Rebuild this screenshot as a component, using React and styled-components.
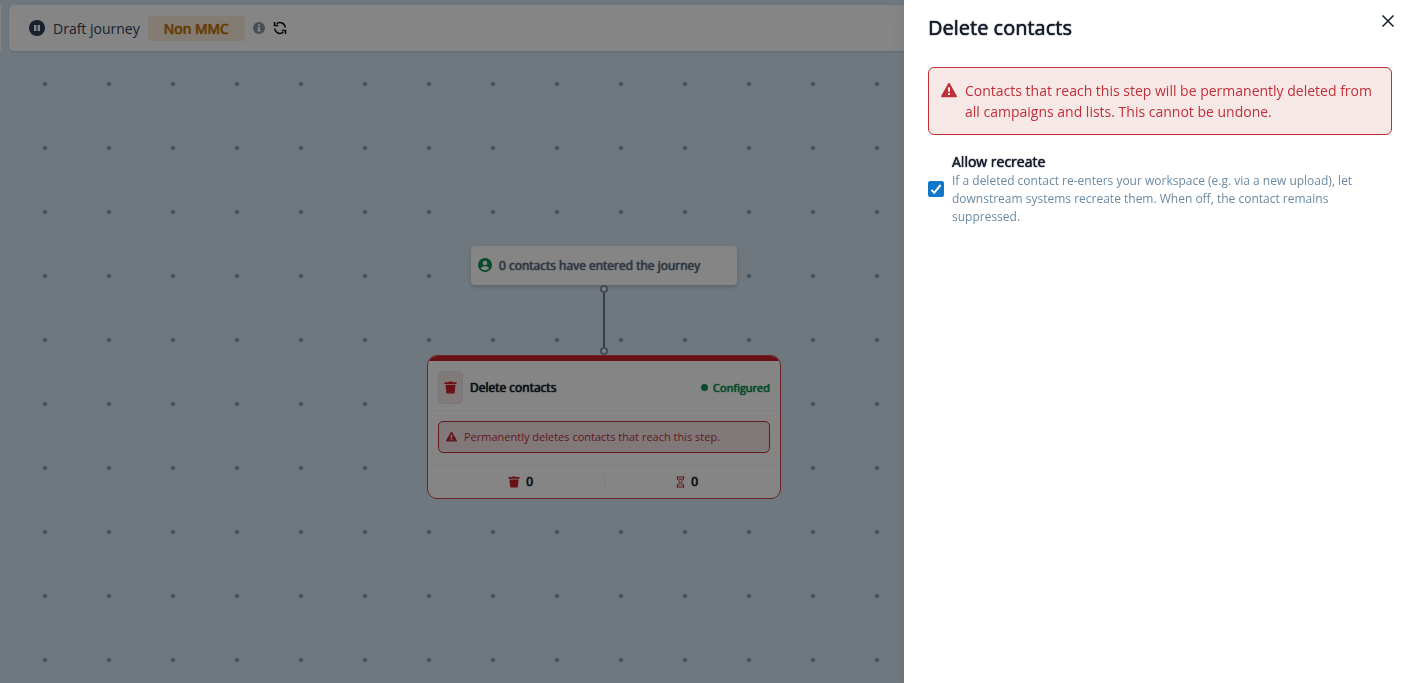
import React, { useState } from 'react';
import styled, { createGlobalStyle, css } from 'styled-components';

const GlobalStyle = createGlobalStyle`
  *, *::before, *::after {
    box-sizing: border-box;
  }

  body {
    margin: 0;
    font-family: "Open Sans", "Noto Sans", sans-serif;
    color: #171e2b;
  }

  h2, h3, p {
    margin: 0;
  }
`;

const TrashIcon = ({ size }) => (
  <svg width={size} height={size} viewBox="0 0 24 24" fill="currentColor" aria-hidden="true">
    <path d="M9 1h6l1.500 1.200H23v3.300H1V2.200h6.500zM2.800 7h18.400L19.800 21.200A2 2 0 0 1 17.800 23H6.200a2 2 0 0 1-2-1.800z" />
  </svg>
);

const WarningIcon = ({ size }) => (
  <svg width={size} height={size} viewBox="0 0 24 24" aria-hidden="true">
    <path d="M12 2.500 22.800 21.500H1.200z" fill="currentColor" stroke="currentColor" strokeWidth="2.400" strokeLinejoin="round" />
    <path d="M12 8v6.500M12 16.500v3" stroke="#f7e8e8" strokeWidth="3" />
  </svg>
);

const HourglassIcon = () => (
  <svg width="9" height="12" viewBox="0 0 18 24" fill="none" stroke="currentColor" strokeWidth="2" aria-hidden="true">
    <path d="M1 2h16M1 22h16M3 2v4.500C3 9 8 10 8 12s-5 3-5 5.500V22M15 2v4.500C15 9 10 10 10 12s5 3 5 5.500V22" />
    <path d="M5 6.500h8M5.500 18.500 9 16l3.500 2.500" />
  </svg>
);

const PauseIcon = () => (
  <svg width="16" height="16" viewBox="0 0 16 16" aria-hidden="true">
    <circle cx="8" cy="8" r="8" fill="#2f3e57" />
    <path d="M5 5h2.400v6H5zM8.600 5H11v6H8.600z" fill="#fff" />
  </svg>
);

const InfoIcon = () => (
  <svg width="12" height="12" viewBox="0 0 12 12" aria-hidden="true">
    <circle cx="6" cy="6" r="6" fill="#8496a8" />
    <path d="M5 2.300h2v1.600H5zM4.400 4.900H7v3.200h.8v1.300H4.300V8.100H5V6.200h-.6z" fill="#fff" />
  </svg>
);

const RefreshIcon = () => (
  <svg width="14" height="14" viewBox="0 0 14 14" fill="none" stroke="#10151d" strokeWidth="1.500" aria-hidden="true">
    <path d="M3.600 2.900A5.300 5.300 0 0 1 12.300 6.500M10.400 11.100A5.300 5.300 0 0 1 1.700 7.500" />
    <path d="M1.500 1v3.600h3.700M12.500 13V9.400H8.800" />
  </svg>
);

const UserIcon = () => (
  <svg width="14" height="14" viewBox="0 0 14 14" aria-hidden="true">
    <circle cx="7" cy="7" r="7" fill="#0c9150" />
    <circle cx="7" cy="5" r="2.300" fill="#fff" />
    <path d="M2.900 10.600C3.500 8.900 5 8.300 7 8.300s3.500.6 4.100 2.300C10 11.800 8.600 12.300 7 12.300s-3-.5-4.100-1.700z" fill="#fff" />
  </svg>
);

const CloseIcon = () => (
  <svg width="12" height="12" viewBox="0 0 12 12" stroke="currentColor" strokeWidth="1.500" aria-hidden="true">
    <path d="M.5.500l11 11M11.500.500l-11 11" />
  </svg>
);

const App = () => {
  const [allowRecreate, setAllowRecreate] = useState(true);

  return (
    <>
      <GlobalStyle />
      <Canvas>
        <TopRow>
          <SideStub />
          <Toolbar>
            <PauseIcon />
            <JourneyName>Draft journey</JourneyName>
            <Tag>Non MMC</Tag>
            <IconButton type="button" aria-label="Journey info"><InfoIcon /></IconButton>
            <IconButton type="button" aria-label="Refresh"><RefreshIcon /></IconButton>
          </Toolbar>
        </TopRow>

        {/* Journey nodes */}
        <Flow>
          <EntryNode>
            <UserIcon />
            <Strong>0 contacts have entered the journey</Strong>
          </EntryNode>
          <Connector>
            <Handle />
            <Line />
            <Handle />
          </Connector>
          <StepNode>
            <StepHeader>
              <StepIcon><TrashIcon size={13} /></StepIcon>
              <StepName>Delete contacts</StepName>
              <Status>Configured</Status>
            </StepHeader>
            <StepBody>
              <StepAlert>
                <WarningIcon size={11} />
                Permanently deletes contacts that reach this step.
              </StepAlert>
            </StepBody>
            <StepStats>
              <Stat><TrashIcon size={12} /><Strong>0</Strong></Stat>
              <Stat><HourglassIcon /><Strong>0</Strong></Stat>
            </StepStats>
          </StepNode>
        </Flow>
      </Canvas>

      <Overlay />

      <Drawer role="dialog" aria-labelledby="drawer-title">
        <DrawerHeader>
          <DrawerTitle id="drawer-title">Delete contacts</DrawerTitle>
          <CloseButton type="button" aria-label="Close"><CloseIcon /></CloseButton>
        </DrawerHeader>
        <Alert>
          <WarningIcon size={16} />
          <p>
            Contacts that reach this step will be permanently deleted from all
            campaigns and lists. This cannot be undone.
          </p>
        </Alert>
        <Option htmlFor="allow-recreate">
          <Checkbox
            id="allow-recreate"
            type="checkbox"
            checked={allowRecreate}
            onChange={(e) => setAllowRecreate(e.target.checked)}
          />
          <OptionText>
            <OptionLabel>Allow recreate</OptionLabel>
            <OptionHint>
              If a deleted contact re-enters your workspace (e.g. via a new
              upload), let downstream systems recreate them. When off, the
              contact remains suppressed.
            </OptionHint>
          </OptionText>
        </Option>
      </Drawer>
    </>
  );
};

/* Thickens the regular cut without changing its widths */
const emphasis = css`
  font-weight: 400;
  text-shadow: 0 0 1px currentColor, 0 0 1px currentColor;
`;

const Canvas = styled.main`
  position: relative;
  min-height: 100vh;
  padding-top: 5px;
  overflow: hidden;
  background-color: #d7e7f3;
  background-image: radial-gradient(circle, #8195a7 1px, transparent 3px);
  background-size: 64px 64px;
  background-position: 13px 52px;
`;

const TopRow = styled.div`
  display: flex;
  gap: 8px;
`;

const SideStub = styled.div`
  width: 1px;
  background: #fff;
`;

const Toolbar = styled.header`
  display: flex;
  flex: 1;
  align-items: center;
  gap: 8px;
  height: 46px;
  padding: 0 20px;
  background: #fff;
  border-radius: 5px;
  box-shadow: 0 1px 2px rgba(40, 70, 100, 0.15);
`;

const JourneyName = styled.span`
  font-size: 14px;
  color: #2f3e57;
`;

const Strong = styled.span`
  ${emphasis}
`;

const Tag = styled(Strong)`
  padding: 0 16px;
  font-size: 14px;
  line-height: 25px;
  color: #c4720c;
  background: #fbeedd;
  border-radius: 1px;
`;

const IconButton = styled.button`
  display: flex;
  padding: 0;
  border: 0;
  background: none;
  cursor: pointer;
`;

const Flow = styled.div`
  position: absolute;
  top: 246px;
  left: 427px;
  display: flex;
  flex-direction: column;
  align-items: center;
  width: 354px;
`;

const EntryNode = styled.div`
  display: flex;
  align-items: center;
  gap: 7px;
  width: 266px;
  height: 39px;
  padding: 0 7px 1px;
  font-size: 12px;
  color: #5d6d84;
  background: #fff;
  border-radius: 4px;
  box-shadow: 0 2px 4px rgba(40, 70, 100, 0.25);
`;

const Connector = styled.div`
  display: flex;
  flex-direction: column;
  align-items: center;
`;

const Handle = styled.span`
  width: 8px;
  height: 8px;
  border: 2px solid #8291ad;
  border-radius: 50%;
  background: #fff;
`;

const Line = styled.span`
  width: 2px;
  height: 54px;
  background: #6a7c96;
`;

const StepNode = styled.section`
  width: 100%;
  overflow: hidden;
  background: #fff;
  border: 1px solid #d8434a;
  border-radius: 10px;

  &::before {
    content: "";
    display: block;
    height: 5px;
    background: #c5202a;
  }
`;

const StepHeader = styled.div`
  display: flex;
  align-items: center;
  gap: 7px;
  padding: 10px 10px 6px;
  border-bottom: 1px solid #f6f6f8;
`;

const StepIcon = styled.span`
  display: flex;
  align-items: center;
  justify-content: center;
  width: 25px;
  height: 33px;
  color: #cb222b;
  background: #f9e8e9;
  border: 1px solid #e2e4ec;
  border-radius: 5px;
`;

const StepName = styled.h3`
  ${emphasis}
  flex: 1;
  font-size: 12px;
`;

const Status = styled(Strong)`
  display: flex;
  align-items: center;
  gap: 5px;
  font-size: 11px;
  color: #0c9150;

  &::before {
    content: "";
    width: 7px;
    height: 7px;
    border-radius: 50%;
    background: currentColor;
  }
`;

const StepBody = styled.div`
  padding: 10px 10px 12px;
`;

const StepAlert = styled.p`
  display: flex;
  align-items: center;
  gap: 7px;
  height: 32px;
  padding: 0 7px 1px;
  font-size: 11px;
  color: #bf3037;
  background: #f7e8e8;
  border: 1px solid #bf3037;
  border-radius: 5px;
`;

const StepStats = styled.div`
  display: flex;
  padding: 8px 10px;
  border-top: 1px solid #f6f6f8;
`;

const Stat = styled.div`
  display: flex;
  flex: 1;
  align-items: center;
  justify-content: center;
  gap: 6px;
  font-size: 12px;
  line-height: 16px;
  color: #cb222b;

  & + & {
    border-left: 1px solid #ececf0;
  }

  span {
    color: #171e2b;
  }
`;

const Overlay = styled.div`
  position: fixed;
  inset: 0;
  background: rgba(0, 0, 0, 0.48);
`;

const Drawer = styled.aside`
  position: fixed;
  top: 0;
  right: 0;
  bottom: 0;
  width: 507px;
  max-width: 100%;
  padding: 14px 19px 24px 24px;
  overflow-y: auto;
  background: #fff;
  box-shadow: 0 0 16px rgba(0, 0, 0, 0.1);
`;

const DrawerHeader = styled.header`
  display: flex;
  justify-content: space-between;
  align-items: flex-start;
  margin-bottom: 25px;
`;

const DrawerTitle = styled.h2`
  ${emphasis}
  font-size: 20px;
  line-height: 28px;
`;

const CloseButton = styled.button`
  display: flex;
  padding: 1px;
  margin-right: -3px;
  border: 0;
  background: none;
  color: #171e2b;
  cursor: pointer;
`;

const Alert = styled.div`
  display: flex;
  gap: 8px;
  padding: 12px;
  font-size: 14px;
  line-height: 21px;
  color: #bf3037;
  background: #f7e8e8;
  border: 1px solid #bf3037;
  border-radius: 6px;

  svg {
    flex-shrink: 0;
    margin-top: 2px;
  }
`;

const Option = styled.label`
  display: flex;
  align-items: center;
  gap: 8px;
  margin-top: 17px;
  cursor: pointer;
`;

const Checkbox = styled.input`
  flex-shrink: 0;
  width: 16px;
  height: 16px;
  margin: 0;
  appearance: none;
  border: 1px solid #1076c8;
  border-radius: 2px;

  &:checked {
    background: #1076c8 url("data:image/svg+xml,%3Csvg xmlns='http://www.w3.org/2000/svg' viewBox='0 0 16 16'%3E%3Cpath d='M3.500 8.800l2.700 3L12.600 4' fill='none' stroke='white' stroke-width='2'/%3E%3C/svg%3E") center / 16px no-repeat;
  }
`;

const OptionText = styled.span`
  display: flex;
  flex-direction: column;
`;

const OptionLabel = styled(Strong)`
  font-size: 14px;
  line-height: 20px;
`;

const OptionHint = styled.span`
  font-size: 12px;
  line-height: 18px;
  color: #6b8aa3;
`;

export default App;
